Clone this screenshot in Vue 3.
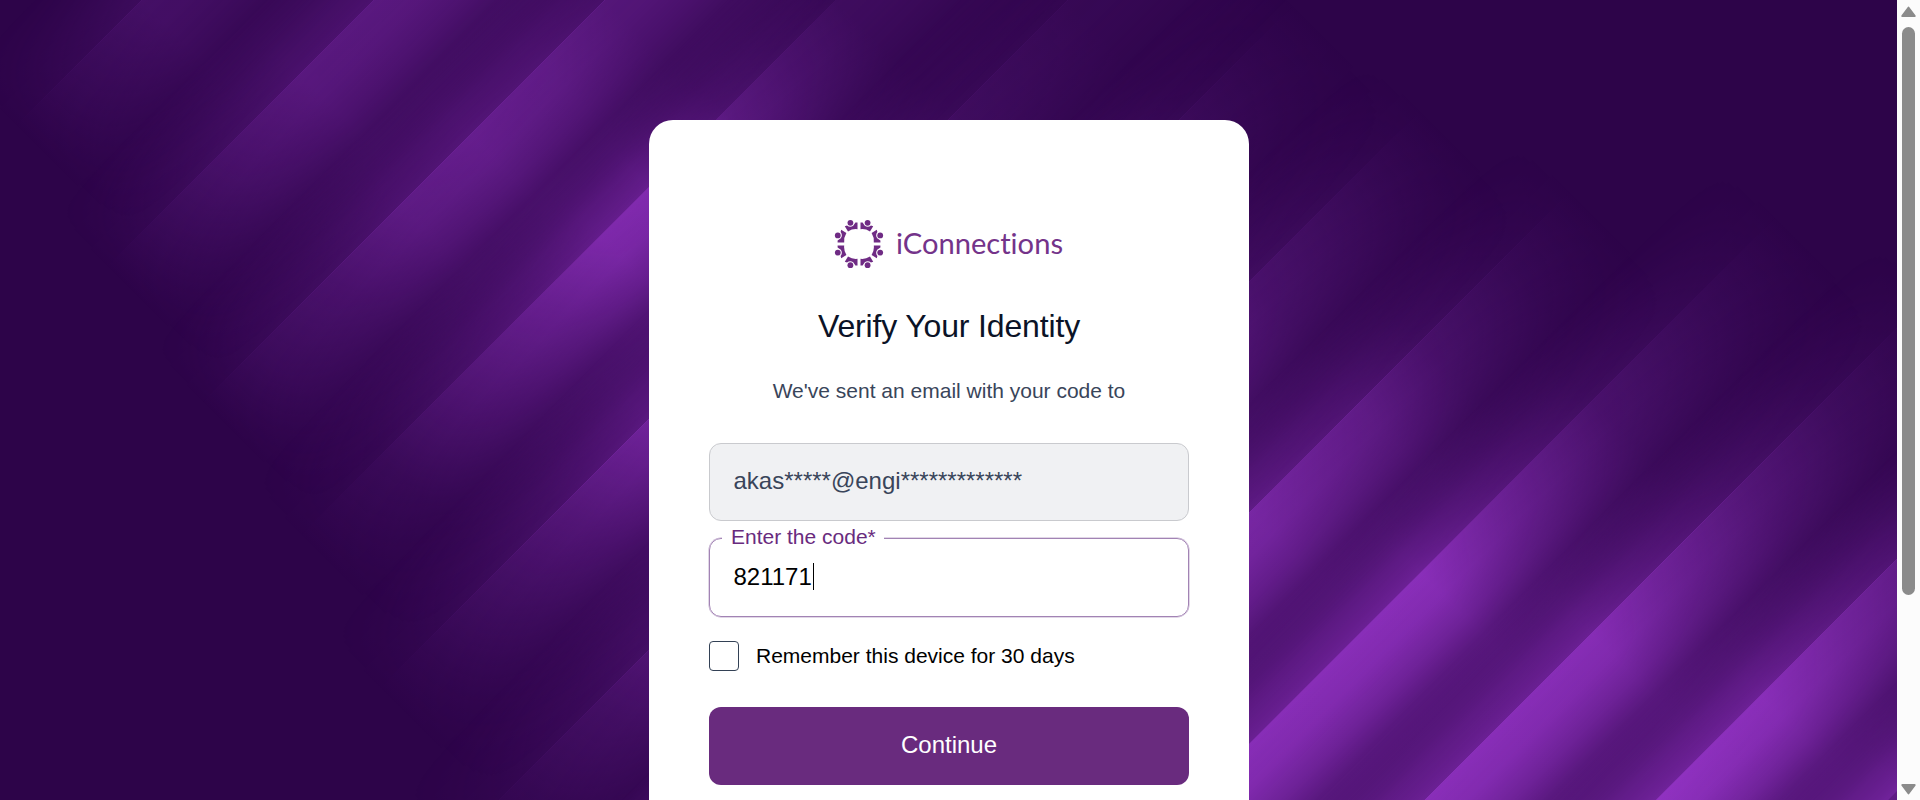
<script setup>
import { ref } from 'vue'

const email = 'akas*****@engi*************'
const code = ref('821171')

// Each ridge sits on a line x + y = pos. Its glow is listed as
// [distance along the line, strength] pairs.
const first = 142
const pitch = 231.4
const glow = [
  [[-142, 0.24], [20, 0.1], [110, 0]],
  [[-375, 0.45], [-225, 0.44], [-85, 0.3], [75, 0.11], [160, 0]],
  [[-605, 0.4], [-475, 0.52], [-335, 0.57], [-195, 0.49], [-55, 0.3], [85, 0.16], [200, 0]],
  [[-836, 0.18], [-726, 0.3], [-615, 0.45], [-462, 0.85], [-364, 0.81], [-244, 0.6], [-44, 0.31], [76, 0.13], [236, 0]],
  [[-1066, 0.1], [-845, 0.18], [-640, 0.4], [-500, 0.75], [-230, 0.68], [-54, 0.39], [66, 0.24], [226, 0.07], [310, 0]],
  [[-1290, 0], [-1183, 0.06], [-1077, 0.13], [-500, 0.8], [1, 0.35], [100, 0.23], [257, 0.1], [400, 0]],
  [[-1311, 0], [-1200, 0.09], [-1091, 0.19], [-969, 0.29], [-800, 0.5], [-500, 0.6]],
  [[-1380, 0], [-1240, 0.11], [-1080, 0.28], [-952, 0.51], [-738, 0.75], [-500, 0.8]],
  [[-1560, 0], [-1408, 0.11], [-1192, 0.29], [-988, 0.65], [-848, 0.93], [-506, 0.91]],
  [[-1640, 0], [-1423, 0.18], [-1257, 0.39], [-1077, 0.68], [-957, 0.9], [-620, 0.93]],
  [[-1750, 0.05], [-1500, 0.25], [-1350, 0.51], [-1205, 0.71], [-1065, 0.93], [-850, 1]],
  [[-1500, 0.4], [-1250, 0.75], [-1110, 1]]
]
const ridges = glow.map((stops, i) => {
  const top = stops[0][0]
  const end = stops[stops.length - 1][0]
  return {
    id: 'ridge' + i,
    pos: first + pitch * i,
    top,
    end,
    dim: i === glow.length - 1 ? 0.5 : 1,
    stops: stops.map(([d, s]) => ({ offset: (d - top) / (end - top), strength: s }))
  }
})
const people = [0, 90, 180, 270]
</script>

<template>
  <div class="screen">
    <main class="page">
      <svg class="backdrop" width="1897" height="800" viewBox="0 0 1897 800" aria-hidden="true">
        <defs>
          <linearGradient id="fadeOut">
            <stop offset="0" stop-color="#fff" />
            <stop offset="0.2" stop-color="#fff" stop-opacity="0.92" />
            <stop offset="0.4" stop-color="#fff" stop-opacity="0.71" />
            <stop offset="0.6" stop-color="#fff" stop-opacity="0.42" />
            <stop offset="0.8" stop-color="#fff" stop-opacity="0.16" />
            <stop offset="1" stop-color="#fff" stop-opacity="0" />
          </linearGradient>
          <linearGradient id="fadeIn">
            <stop offset="0" stop-color="#fff" stop-opacity="0" />
            <stop offset="0.35" stop-color="#fff" stop-opacity="0.24" />
            <stop offset="0.65" stop-color="#fff" stop-opacity="0.48" />
            <stop offset="1" stop-color="#fff" stop-opacity="0.68" />
          </linearGradient>
          <mask id="after" maskContentUnits="objectBoundingBox" x="0" y="0" width="1" height="1">
            <rect width="1" height="1" fill="url(#fadeOut)" />
          </mask>
          <mask id="before" maskContentUnits="objectBoundingBox" x="0" y="0" width="1" height="1">
            <rect width="1" height="1" fill="url(#fadeIn)" />
          </mask>
          <linearGradient
            v-for="r in ridges" :id="r.id" :key="r.id"
            gradientUnits="userSpaceOnUse" x1="0" x2="0" :y1="r.top" :y2="r.end"
          >
            <stop v-for="s in r.stops" :key="s.offset" :offset="s.offset" stop-color="#9132c2" :stop-opacity="s.strength" />
          </linearGradient>
        </defs>
        <g transform="matrix(.5 .5 -.5 .5 0 0)">
          <g v-for="r in ridges" :key="r.id" :fill="`url(#${r.id})`">
            <rect :x="r.pos - 109.3" y="-2000" width="110" height="3000" mask="url(#before)" />
            <rect :x="r.pos - 0.4" y="-2000" width="224" height="3000" mask="url(#after)" :opacity="r.dim" />
          </g>
        </g>
      </svg>

      <section class="card">
        <svg class="logo" width="230" height="50" viewBox="834 219 230 50" role="img" aria-label="iConnections">
          <g fill="#6f2b84">
            <g v-for="a in people" :key="a" :transform="`rotate(${a} 859 244)`">
              <g>
                <circle cx="850.4" cy="222.8" r="2.9" />
                <path d="M844.8 226.2 L847 225.6 Q850.2 228 853.2 225.8 L855.4 222.6 H857.5 V229.2 Q852.5 228.6 848 231.4 Z" />
              </g>
              <g transform="matrix(-1 0 0 1 1718 0)">
                <circle cx="850.4" cy="222.8" r="2.9" />
                <path d="M844.8 226.2 L847 225.6 Q850.2 228 853.2 225.8 L855.4 222.6 H857.5 V229.2 Q852.5 228.6 848 231.4 Z" />
              </g>
            </g>
          </g>
          <text class="wordmark" x="896" y="254" textLength="167" lengthAdjust="spacingAndGlyphs">iConnections</text>
        </svg>

        <h1 class="title">Verify Your Identity</h1>
        <p class="lead">We've sent an email with your code to</p>

        <div class="readonly">{{ email }}</div>
        <div class="field">
          <span class="label">Enter the code*</span>
          <span class="value">{{ code }}</span><span class="caret"></span>
        </div>
        <div class="remember">
          <span class="box"></span>
          <span>Remember this device for 30 days</span>
        </div>
        <button class="submit" type="button">Continue</button>
      </section>
    </main>

    <aside class="scrollbar">
      <svg width="23" height="24" viewBox="0 0 23 24"><path d="M10.6 7.2 Q11.5 5.8 12.4 7.2 L18.6 15.4 Q19.2 17 17.6 17 H5.4 Q3.8 17 4.4 15.4 Z" /></svg>
      <div class="thumb"></div>
      <svg class="down" width="23" height="24" viewBox="0 0 23 24"><path d="M10.6 19.8 Q11.5 21.2 12.4 19.8 L18.6 11.6 Q19.2 10 17.6 10 H5.4 Q3.8 10 4.4 11.6 Z" /></svg>
    </aside>
  </div>
</template>

<style>
body {
  margin: 0;
  overflow: hidden;
}
</style>

<style scoped>
.screen {
  display: flex;
  width: 1920px;
  height: 800px;
  overflow: hidden;
  font-family: "Liberation Sans", Arial, sans-serif;
}
.page {
  position: relative;
  flex: 1;
  display: flex;
  justify-content: center;
  overflow: hidden;
  background: #2d0449;
}
.backdrop {
  position: absolute;
  left: 0;
  top: 0;
}
.card {
  position: relative;
  box-sizing: border-box;
  width: 600px;
  height: 900px;
  margin: 120px 0 0 1px;
  padding: 99px 60px 0;
  border-radius: 24px;
  background: #fff;
  display: flex;
  flex-direction: column;
}
.logo {
  display: block;
  margin: 0 auto;
  overflow: visible;
}
.wordmark {
  font-family: Lato, sans-serif;
  font-size: 28px;
  font-variant-ligatures: none;
  fill: #74338a;
}
.title {
  margin: 35px 0 0;
  font-size: 32px;
  font-weight: 400;
  line-height: 44px;
  letter-spacing: -0.15px;
  text-align: center;
  color: #0b1327;
}
.lead {
  margin: 27px 0 0;
  font-size: 21px;
  line-height: 32px;
  text-align: center;
  color: #39455a;
}
.readonly {
  box-sizing: border-box;
  height: 78px;
  margin-top: 36px;
  padding: 0 23.5px;
  border: 1px solid #c9cace;
  border-radius: 12px;
  background: #f0f1f3;
  color: #39455a;
  font-size: 24px;
  line-height: 74px;
}
.field {
  position: relative;
  box-sizing: border-box;
  display: flex;
  align-items: center;
  height: 79px;
  margin-top: 17px;
  padding: 0 23px 2px;
  border: 1px solid #a283b4;
  border-radius: 12px;
  box-shadow: 0 0 0 0.5px #c4afd0;
  font-size: 24px;
  color: #000;
}
.value {
  width: 81px;
  margin-left: 0.5px;
  white-space: nowrap;
}
.label {
  position: absolute;
  left: 12px;
  top: -16px;
  padding: 0 8px 0 9px;
  background: #fff;
  font-size: 21px;
  line-height: 28px;
  color: #692b7e;
}
.caret {
  width: 1px;
  height: 27px;
  margin-left: -2px;
  background: #000;
}
.remember {
  display: flex;
  align-items: center;
  gap: 17px;
  margin-top: 24px;
  font-size: 21px;
  line-height: 30px;
  color: #000;
}
.box {
  box-sizing: border-box;
  width: 30px;
  height: 30px;
  border: 1px solid #334155;
  border-radius: 4px;
}
.submit {
  height: 78px;
  margin-top: 36px;
  padding: 0 0 2px;
  border: 0;
  border-radius: 12px;
  background: #692b7e;
  color: #fff;
  font: 24px "Liberation Sans", Arial, sans-serif;
}
.scrollbar {
  display: flex;
  flex-direction: column;
  align-items: center;
  width: 23px;
  background: #fcfcfc;
  fill: #8b8b8b;
}
.thumb {
  width: 13px;
  height: 568px;
  margin-top: 3px;
  border-radius: 7px;
  background: #8b8b8b;
}
.down {
  margin-top: auto;
  margin-bottom: 2px;
}
</style>
